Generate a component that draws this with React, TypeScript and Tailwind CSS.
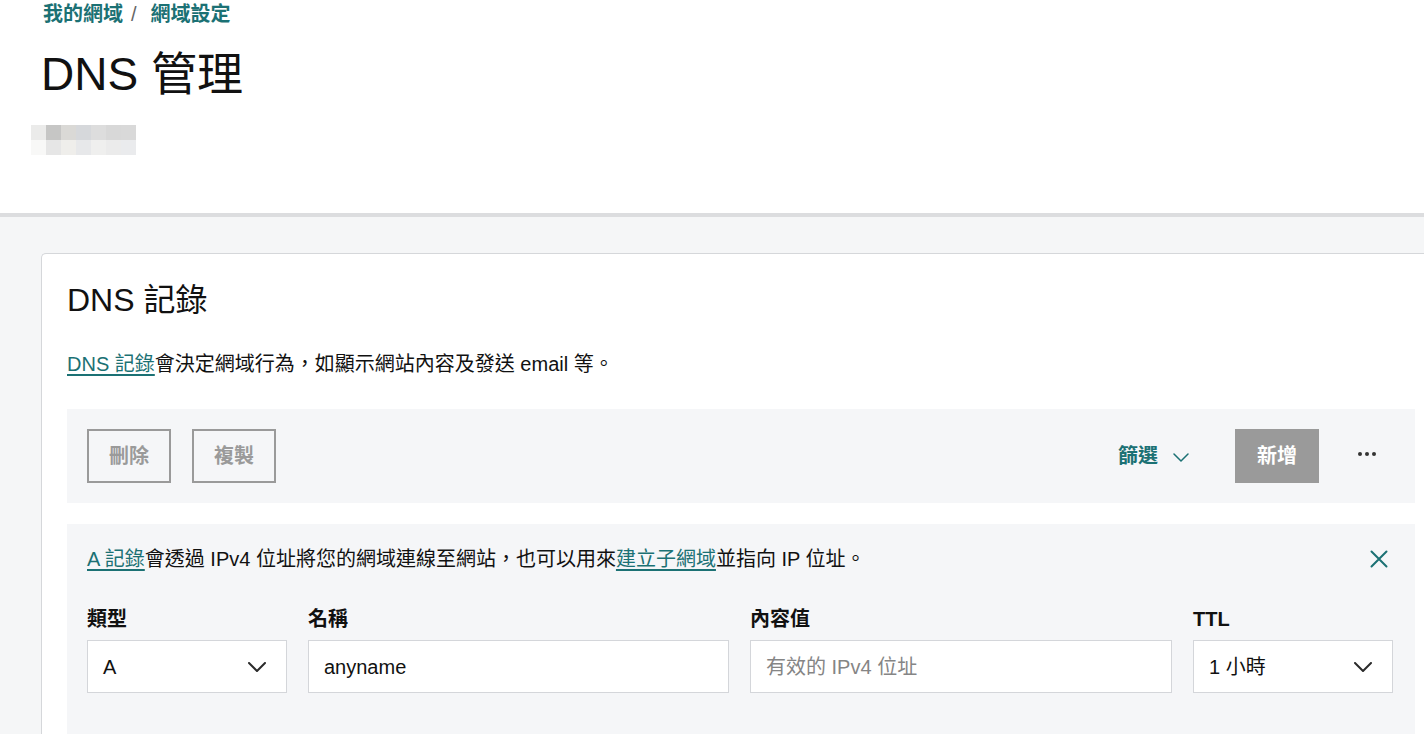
import React from "react";

const FONT = '"Liberation Sans", Arial, "Noto Sans CJK TC", sans-serif';

const pixelRows = [
  ["#ebebea", "#c6c6c5", "#dad9d6", "#d6d8db", "#dddddd", "#d8d8d8", "#d9d9d9"],
  ["#f8f8f7", "#e6e6e6", "#efeeeb", "#e7e8ea", "#efefee", "#ebebeb", "#eaebed"],
];

function Chevron({ className, stroke = "#2b2b2b", w = 18, h = 10, sw = 2 }: { className?: string; stroke?: string; w?: number; h?: number; sw?: number }) {
  return (
    <svg width={w} height={h} viewBox={`0 0 ${w} ${h}`} className={className} fill="none">
      <path d={`M1 1 L${w / 2} ${h - 1} L${w - 1} 1`} stroke={stroke} strokeWidth={sw} strokeLinecap="round" strokeLinejoin="round" />
    </svg>
  );
}

export default function App() {
  return (
    <div className="w-[1424px] h-[734px] overflow-hidden bg-[#f5f6f7] text-[#111]" style={{ fontFamily: FONT }}>
      {/* Header */}
      <div className="bg-white h-[217px] border-b-4 border-[#dcdddf] pl-[43px]">
        <div className="flex items-center h-[28px] text-[20px] leading-[28px] font-bold">
          <a className="text-[#1b7174]">我的網域</a>
          <span className="text-[#666] font-normal mx-[8px]">/</span>
          <a className="text-[#1b7174] ml-[6px]">網域設定</a>
        </div>
        <h1 className="-ml-[2px] mt-[18px] text-[46px] leading-[56px] font-normal text-[#111]">DNS 管理</h1>
        <div className="mt-[23px] -ml-[12px] flex flex-col">
          {pixelRows.map((row, i) => (
            <div key={i} className="flex">
              {row.map((c, j) => (
                <div key={j} className="w-[15px] h-[15px]" style={{ backgroundColor: c }} />
              ))}
            </div>
          ))}
        </div>
      </div>

      {/* Card */}
      <div className="ml-[41px] mt-[36px] w-[1399px] bg-white border-l border-t border-[#d5d7da] rounded-tl-[5px] px-[25px] pt-[26px] h-[600px]">
        <h2 className="text-[32px] leading-[40px] font-normal">DNS 記錄</h2>
        <p className="mt-[29px] text-[20px] leading-[30px]">
          <a className="text-[#1b7174] underline underline-offset-[3px] decoration-[1.5px]">DNS 記錄</a>會決定網域行為，如顯示網站內容及發送 email 等。
        </p>

        {/* Toolbar */}
        <div className="mt-[30px] h-[94px] bg-[#f5f6f8] flex items-center pl-[20px]">
          <button className="w-[84px] h-[54px] border-2 border-[#9a9a9a] text-[#9a9a9a] text-[20px] font-bold flex items-center justify-center">刪除</button>
          <button className="ml-[21px] w-[84px] h-[54px] border-2 border-[#9a9a9a] text-[#9a9a9a] text-[20px] font-bold flex items-center justify-center">複製</button>
          <div className="ml-auto flex items-center">
            <button className="flex items-center text-[20px] font-bold text-[#1b7174]">
              篩選
              <Chevron className="ml-[15px] mt-[2px]" stroke="#1b7174" w={16} h={9} sw={1.5} />
            </button>
            <button className="ml-[46px] w-[84px] h-[54px] bg-[#9a9a9a] text-white text-[20px] font-bold flex items-center justify-center">新增</button>
            <button className="w-[96px] h-[54px] flex items-center justify-center gap-[3px] -mt-[4px]">
              <span className="w-[4px] h-[4px] rounded-full bg-[#333]" />
              <span className="w-[4px] h-[4px] rounded-full bg-[#333]" />
              <span className="w-[4px] h-[4px] rounded-full bg-[#333]" />
            </button>
          </div>
        </div>

        {/* Info / form panel */}
        <div className="mt-[21px] bg-[#f5f6f8] pl-[20px] pr-[21px] pt-[20px] h-[300px]">
          <div className="flex items-center justify-between">
            <p className="text-[20px] leading-[30px]">
              <a className="text-[#1b7174] underline underline-offset-[3px] decoration-[1.5px]">A 記錄</a>會透過 IPv4 位址將您的網域連線至網站，也可以用來<a className="text-[#1b7174] underline underline-offset-[3px] decoration-[1.5px]">建立子網域</a>並指向 IP 位址。
            </p>
            <button className="w-[30px] h-[30px] flex items-center justify-center">
              <svg width="18" height="18" viewBox="0 0 18 18" fill="none">
                <path d="M1.5 1.5 L16.5 16.5 M16.5 1.5 L1.5 16.5" stroke="#1b7174" strokeWidth="2" strokeLinecap="round" />
              </svg>
            </button>
          </div>

          <div className="mt-[30px] grid grid-cols-[200px_421px_422px_200px] gap-x-[21px]">
            {[
              { label: "類型", kind: "select", value: "A" },
              { label: "名稱", kind: "input", value: "anyname" },
              { label: "內容值", kind: "placeholder", value: "有效的 IPv4 位址" },
              { label: "TTL", kind: "select", value: "1 小時" },
            ].map((f) => (
              <div key={f.label} className="flex flex-col">
                <label className="text-[20px] leading-[30px] font-bold">{f.label}</label>
                <div className="mt-[6px] h-[53px] bg-white border border-[#d4d6da] flex items-center pl-[15px] pr-[20px]">
                  <span className={`text-[20px] ${f.kind === "placeholder" ? "text-[#858585]" : "text-[#111]"}`}>{f.value}</span>
                  {f.kind === "select" && <Chevron className="ml-auto" />}
                </div>
              </div>
            ))}
          </div>
        </div>
      </div>
    </div>
  );
}
